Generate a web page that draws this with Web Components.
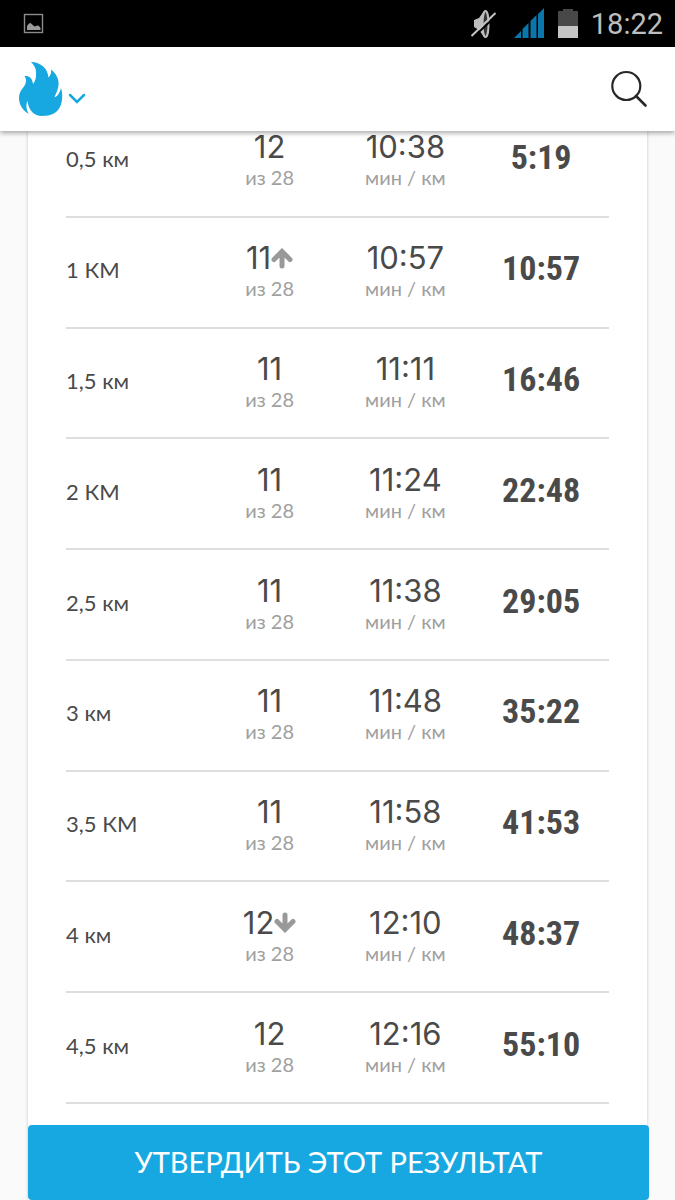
<!DOCTYPE html>
<html lang="ru">
<head>
<meta charset="utf-8">
<meta name="viewport" content="width=device-width, initial-scale=1">
<title>Результаты</title>
<style>
html,body{margin:0;height:100%}
body{font-family:Lato,"Open Sans",sans-serif;color:#4a4a4a;background:#fafafa}
</style>
</head>
<body>
<run-screen>
  <status-bar slot="status" time="18:22"></status-bar>
  <app-header slot="header"></app-header>
  <splits-card></splits-card>
  <confirm-action slot="action">УТВЕРДИТЬ ЭТОТ РЕЗУЛЬТАТ</confirm-action>
</run-screen>
<script>
class Base extends HTMLElement{
  constructor(){super();this.attachShadow({mode:'open'});}
  connectedCallback(){this.shadowRoot.innerHTML=this.render();}
}
customElements.define('run-screen',class extends Base{render(){return `
<style>
:host{display:flex;flex-direction:column;height:100vh;overflow:hidden;position:relative}
main{flex:1;min-height:0;overflow:hidden;display:flex;flex-direction:column}
footer{position:absolute;left:0;right:0;bottom:0;padding:0 26px 0 28px}
::slotted([slot=header]){position:relative;z-index:1}
</style>
<slot name="status"></slot><slot name="header"></slot>
<main><slot></slot></main>
<footer><slot name="action"></slot></footer>`}});

customElements.define('status-bar',class extends Base{render(){return `
<style>
:host{display:flex;align-items:center;height:47px;padding:0 12px 0 23px;background:#000;color:#bebebe;font:29px/48px Roboto,sans-serif;flex:none}
svg{display:block}
.mute{margin-left:auto}
.signal{margin-left:16px}
.battery{margin:0 13px 0 14px}
</style>
<svg width="21" height="21" viewBox="0 0 21 21" aria-hidden="true"><rect x="1.5" y="1.5" width="18" height="18" fill="none" stroke="#8c8c8c" stroke-width="1.4"/><path d="M4 17v-4l2-2.5 1.500-.5 2 1.800 2 1.800 3-1.200 1.500.6 1.500 2V17z" fill="#999"/></svg>
<svg class="mute" width="27" height="32" viewBox="0 0 27 32" aria-hidden="true"><path d="M4 12l5-2 5-7 2-1v28l-2-1-5-7-5-3z" fill="#bdbdbd"/><ellipse cx="15.500" cy="16" rx="3" ry="13" fill="#333" stroke="#bdbdbd" stroke-width="2"/><path d="M2.500 30L27 7" stroke="#000" stroke-width="2"/><path d="M1.500 28L25.500 5" stroke="#c4c4c4" stroke-width="2"/></svg>
<svg class="signal" width="31" height="31" viewBox="0 0 31 31" fill="#0b76a9" aria-hidden="true"><path d="M1 30l7-7v7zM9.500 30v-9l6-6v15zM17.500 30V13l6-6v23zM25 30V6l6-6v30z"/></svg>
<svg class="battery" width="20" height="31" viewBox="0 0 20 31" aria-hidden="true"><path d="M0 3h5V1h10v2h5v15H0z" fill="#484848"/><path d="M0 18h20v12H0z" fill="#c4c4c4"/></svg>
<time>${this.getAttribute('time')}</time>`}});

customElements.define('app-header',class extends Base{render(){return `
<style>
:host{display:flex;justify-content:space-between;align-items:center;height:84px;padding:0 26px 0 18px;background:#fff;box-shadow:0 2px 5px rgba(0,0,0,.35);flex:none}
button{border:0;padding:0;background:none;display:flex;align-items:center;gap:4px;cursor:pointer}
svg{display:block}
.chev{margin-top:18px}
</style>
<button aria-label="Меню">
<svg width="46" height="56" viewBox="0 0 46 56" aria-hidden="true"><path fill="#18a8e1" d="M13 1C23 1 30 8 30.500 16.500C33 14 33.500 11 33 8.500C39 13 42 20 40 27C39 31 37.500 33 36.500 36.500C40 35 42 31 43 27C45 33 44.500 41 42 46C39 52 33 55 24 55C16 55 10.500 49 9.500 40C7.500 44 8.500 50 11 53C4 49 1 43 1 37C1 28 8 26 8 20C8 18 7.500 16.500 6.500 15C11 14.500 14.500 17 15 23C17.500 20 18.500 16 18 11C18 7 16 4 13 1Z"/></svg>
<svg class="chev" width="18" height="11" viewBox="0 0 18 11" aria-hidden="true"><path d="M2 2l7 7 7-7" fill="none" stroke="#18a8e1" stroke-width="2.500" stroke-linecap="round"/></svg>
</button>
<button aria-label="Поиск">
<svg width="40" height="40" viewBox="0 0 40 40" aria-hidden="true"><g fill="none" stroke="#272727" stroke-width="2.200"><circle cx="17.300" cy="17" r="14"/><path d="M27 27l9.500 9.500" stroke-width="2.600" stroke-linecap="round"/></g></svg>
</button>`}});

const splits=[
 ['0,5 км','12','10:38','5:19'],['1 КМ','11','10:57','10:57','up'],['1,5 км','11','11:11','16:46'],
 ['2 КМ','11','11:24','22:48'],['2,5 км','11','11:38','29:05'],['3 км','11','11:48','35:22'],
 ['3,5 КМ','11','11:58','41:53'],['4 км','12','12:10','48:37','down'],['4,5 км','12','12:16','55:10']];
const arrow=dir=>dir?`<svg class="${dir}" width="22" height="21" viewBox="0 0 22 21" role="img" aria-label="${dir==='up'?'выше':'ниже'}"><path d="M11 18V4M3 11.500L11 3.500l8 8" fill="none" stroke="#999" stroke-width="5" stroke-linecap="round"/></svg>`:'';
customElements.define('splits-card',class extends Base{render(){return `
<style>
:host{display:flex;flex:1;min-height:0;box-sizing:border-box;margin:0 28px;padding:0 38px 96px;background:#fff;box-shadow:0 0 3px rgba(0,0,0,.22)}
table{display:flex;flex:1;margin-top:-24px}
tbody{display:flex;flex-direction:column;flex:1}
tr{display:grid;grid-template-columns:repeat(4,1fr);align-items:center;flex:1;border-bottom:2px solid #dedede;box-sizing:border-box;padding-bottom:4px}
th,td{display:block;padding:0;text-align:center;font-weight:400}
th{text-align:left;font-size:22px;line-height:24px}
.value{display:flex;justify-content:center;align-items:center;font:31px/36px Inter,sans-serif}
small{display:block;font-size:20px;line-height:24px;color:#a0a0a0}
.total{font:700 34px/40px "Roboto Condensed",Roboto,sans-serif;padding-bottom:4px}
.down{transform:rotate(180deg)}
</style>
<table aria-label="Отрезки"><tbody>${splits.map(([d,p,pace,t,dir])=>`
<tr><th scope="row">${d}</th><td><span class="value">${p}${arrow(dir)}</span><small>из 28</small></td><td><span class="value">${pace}</span><small>мин / км</small></td><td class="total">${t}</td></tr>`).join('')}
</tbody></table>`}});

customElements.define('confirm-action',class extends Base{render(){return `
<style>
:host{display:block}
button{display:block;width:100%;height:75px;border:0;border-radius:4px;background:#18a8e1;color:#fff;font:inherit;font-size:29px;line-height:36px;padding:0 0 2px;cursor:pointer}
</style>
<button><slot></slot></button>`}});
</script>
</body>
</html>
